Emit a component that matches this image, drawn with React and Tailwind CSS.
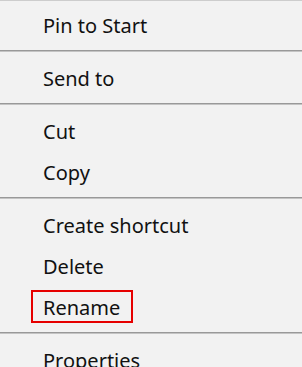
const groups = [
  ['Pin to Start'],
  ['Send to'],
  ['Cut', 'Copy'],
  ['Create shortcut', 'Delete', 'Rename'],
  ['Properties'],
];

function Item({ label }) {
  return (
    <div className="relative h-[41px] flex items-center pl-[43px] pt-[2px] text-[20px] text-[#111]">
      <span className="leading-none">{label}</span>
      {label === 'Rename' && (
        <div className="absolute left-[31px] top-[4px] w-[102px] h-[33px] border-2 border-[#e60000]" />
      )}
    </div>
  );
}

export default function App() {
  return (
    <div
      className="w-[302px] h-[367px] overflow-hidden bg-[#f2f2f2] border-t border-[#cdcdcd] pt-[3px]"
      style={{ fontFamily: '"Noto Sans", "Open Sans", sans-serif' }}
    >
      {groups.map((g, i) => (
        <div key={i}>
          {i > 0 && (
            <div className="pt-[5px] pb-[5px]">
              <div className="h-px bg-[#999]" />
              <div className="h-px bg-[#c4c4c4]" />
            </div>
          )}
          {g.map((label) => (
            <Item key={label} label={label} />
          ))}
        </div>
      ))}
    </div>
  );
}
